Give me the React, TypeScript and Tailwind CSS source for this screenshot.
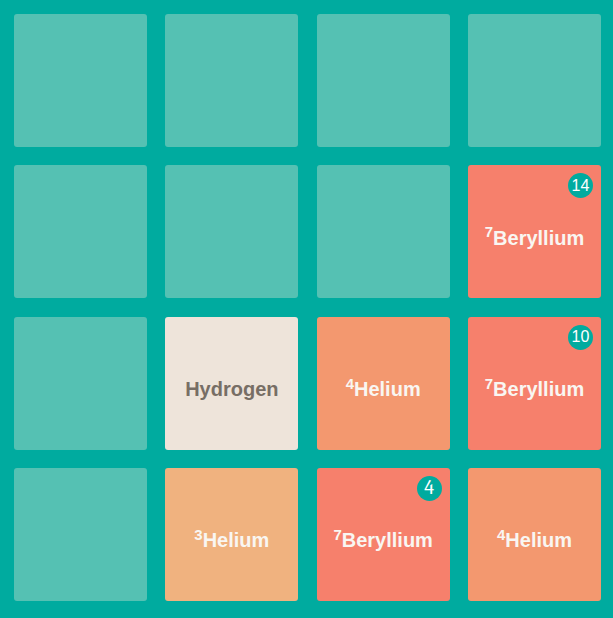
import React from "react";

type Tile = {
  name?: string;
  mass?: number;
  badge?: number;
  kind?: "h" | "he3" | "he4" | "be7";
};

const tileStyles: Record<string, string> = {
  h: "bg-[#eee4da] text-[#776e65]",
  he3: "bg-[#f0b27f] text-[#f9f6f2]",
  he4: "bg-[#f3986f] text-[#f9f6f2]",
  be7: "bg-[#f6806c] text-[#f9f6f2]",
};

const board: Tile[] = [
  {}, {}, {}, {},
  {}, {}, {}, { name: "Beryllium", mass: 7, badge: 14, kind: "be7" },
  {}, { name: "Hydrogen", kind: "h" }, { name: "Helium", mass: 4, kind: "he4" }, { name: "Beryllium", mass: 7, badge: 10, kind: "be7" },
  {}, { name: "Helium", mass: 3, kind: "he3" }, { name: "Beryllium", mass: 7, badge: 4, kind: "be7" }, { name: "Helium", mass: 4, kind: "he4" },
];

const Cell = ({ tile }: { tile: Tile }) => {
  if (!tile.kind) {
    return <div className="h-[133px] rounded-[3px] bg-[#55c1b3]" />;
  }
  return (
    <div className={`relative h-[133px] rounded-[3px] flex items-center justify-center pt-[12px] ${tileStyles[tile.kind]}`}>
      <span className="text-[20px] font-bold leading-none">
        {tile.mass && <sup>{tile.mass}</sup>}
        {tile.name}
      </span>
      {tile.badge && (
        <span
          className={`absolute top-2 right-2 w-[25px] h-[25px] rounded-full bg-[#00ab9f] text-white flex items-center justify-center leading-none ${
            tile.badge < 10 ? "text-[20px] font-serif" : "text-[16px]"
          }`}
        >
          {tile.badge}
        </span>
      )}
    </div>
  );
};

export default function App() {
  return (
    <div className="w-[613px] h-[618px] bg-[#00ab9f] pl-[14px] pt-[14px] pr-[12px] pb-[17px] font-[family-name:'Liberation_Sans',Arial,sans-serif]">
      <div className="grid grid-cols-4 gap-[18.33px]">
        {board.map((tile, i) => (
          <Cell key={i} tile={tile} />
        ))}
      </div>
    </div>
  );
}
